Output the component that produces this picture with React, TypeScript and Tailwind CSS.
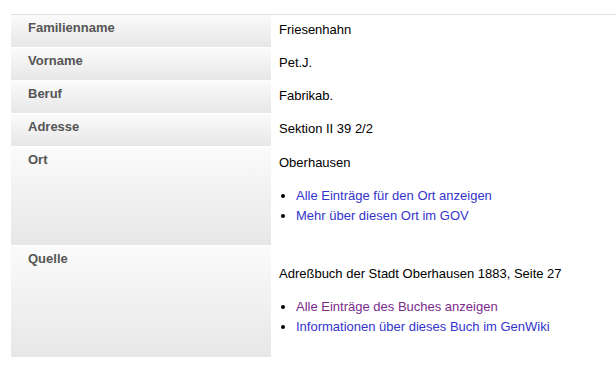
const rows: { label: string; value: string }[] = [
  { label: 'Familienname', value: 'Friesenhahn' },
  { label: 'Vorname', value: 'Pet.J.' },
  { label: 'Beruf', value: 'Fabrikab.' },
  { label: 'Adresse', value: 'Sektion II 39 2/2' },
];

function Label({ text }: { text: string }) {
  return (
    <div className="w-[260px] shrink-0 border-b border-white bg-linear-to-b from-[#fbfbfb] to-[#e7e7e7] pl-[17px] pt-[5px] font-bold text-[#555555]">
      {text}
    </div>
  );
}

function Links({ links }: { links: { text: string; visited?: boolean }[] }) {
  return (
    <ul className="mt-[16px] list-disc pl-[17px]">
      {links.map((l) => (
        <li key={l.text} className="leading-[20px]">
          <a href="#" className={l.visited ? 'text-[#7a2b8c]' : 'text-[#3434cc]'}>
            {l.text}
          </a>
        </li>
      ))}
    </ul>
  );
}

export default function App() {
  return (
    <div className="min-h-[371px] bg-white pl-[11px] pt-[14px] font-['Liberation_Sans',Arial,sans-serif] text-[13px] leading-[15px] text-black">
      <div className="border-t border-[#e0e0e0]">
        {rows.map((r) => (
          <div key={r.label} className="flex h-[33px]">
            <Label text={r.label} />
            <div className="pl-[8px] pt-[7px]">{r.value}</div>
          </div>
        ))}
        <div className="flex h-[99px]">
          <Label text="Ort" />
          <div className="pl-[8px] pt-[8px]">
            <div>Oberhausen</div>
            <Links
              links={[
                { text: 'Alle Einträge für den Ort anzeigen' },
                { text: 'Mehr über diesen Ort im GOV' },
              ]}
            />
          </div>
        </div>
        <div className="flex h-[112px]">
          <Label text="Quelle" />
          <div className="pl-[8px] pt-[20px]">
            <div>Adreßbuch der Stadt Oberhausen 1883, Seite 27</div>
            <Links
              links={[
                { text: 'Alle Einträge des Buches anzeigen', visited: true },
                { text: 'Informationen über dieses Buch im GenWiki' },
              ]}
            />
          </div>
        </div>
      </div>
    </div>
  );
}
